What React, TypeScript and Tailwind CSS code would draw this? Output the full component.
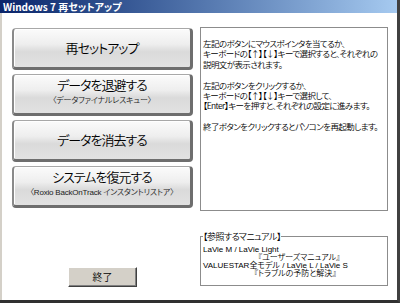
import React from "react";

const jp = "font-['Noto_Sans_CJK_JP','Noto_Sans',sans-serif]";
const mixed = "font-['Liberation_Sans','Noto_Sans_CJK_JP',sans-serif]";

function BigButton({ title, sub }: { title: string; sub?: string }) {
  return (
    <div
      className={`h-[42px] w-[181px] shrink-0 rounded-[4px] border-t border-l-2 border-r-[3px] border-b-[3px] border-t-[#a8a8a8] border-l-[#8a8a8a] border-r-[#6e6e6e] border-b-[#6e6e6e] bg-[linear-gradient(to_bottom,#fbfbfb_0%,#eeeeee_40%,#dadada_60%,#e2e2e2_100%)] shadow-[inset_1px_1px_0_#ffffff] flex flex-col items-center ${
        sub ? "justify-start pt-[2px]" : "justify-center"
      }`}
    >
      <div className={`text-[13px] leading-[16px] tracking-[-1px] text-black whitespace-nowrap ${sub ? "" : "-mt-[1px]"}`}>
        {title}
      </div>
      {sub && (
        <div className={`text-[8px] leading-[10px] tracking-[-0.2px] text-[#222] whitespace-nowrap mt-[3px] ${mixed}`}>
          {sub}
        </div>
      )}
    </div>
  );
}

export default function App() {
  return (
    <div
      className={`w-[400px] h-[303px] bg-white flex flex-col border-r-[3px] border-b-[3px] border-r-[#404040] border-b-[#303030] ${jp} font-[350] [font-feature-settings:'palt']`}
    >
      <div className="h-[13px] shrink-0 bg-linear-to-r from-[#0a246a] to-[#a6caf0] flex items-center pl-[3px]">
        <span className="text-white font-bold text-[10px] leading-[13px] whitespace-nowrap">
          Windows 7 再セットアップ
        </span>
      </div>
      <div className="flex-1 flex flex-row border-l-2 border-l-[#d4d0c8]">
        <div className="ml-[10px] pt-[15px] flex flex-col">
          <div className="flex flex-col gap-[4px]">
            <BigButton title="再セットアップ" />
            <BigButton title="データを退避する" sub="〈データファイナルレスキュー〉" />
            <BigButton title="データを消去する" />
            <BigButton title="システムを復元する" sub="〈Roxio BackOnTrack インスタントリストア〉" />
          </div>
          <div className="mt-[59px] ml-[56px] w-[69px] h-[20px] shrink-0 bg-[#d4d0c8] border border-t-white border-l-white border-r-[#404040] border-b-[#404040] shadow-[inset_-1px_-1px_0_#808080] flex items-center justify-center">
            <span className="text-[10px] leading-[12px] text-black">終了</span>
          </div>
        </div>
        <div className="ml-[7px] pt-[14px] flex flex-col w-[188px]">
          <div className="h-[184px] shrink-0 border border-[#8c8c8c] pt-[10px] pl-[2px] text-[8.5px] leading-[10.4px] text-black tracking-[-0.6px] whitespace-nowrap">
            <div>左記のボタンにマウスポインタを当てるか、</div>
            <div>キーボードの【↑】【↓】キーで選択すると、それぞれの</div>
            <div>説明文が表示されます。</div>
            <div>&nbsp;</div>
            <div>左記のボタンをクリックするか、</div>
            <div>キーボードの【↑】【↓】キーで選択して、</div>
            <div>【Enter】キーを押すと、それぞれの設定に進みます。</div>
            <div>&nbsp;</div>
            <div>終了ボタンをクリックするとパソコンを再起動します。</div>
          </div>
          <fieldset className="mt-[20px] h-[55px] shrink-0 border border-[#8c8c8c] pl-[2px] pt-[4px]">
            <legend className="text-[9px] leading-[11px] text-black whitespace-nowrap tracking-[-0.5px]">【参照するマニュアル】</legend>
            <div className={`text-[8px] leading-[8px] text-black whitespace-nowrap ${mixed}`}>
              <div>LaVie M / LaVie Light</div>
              <div className="pl-[55px]">『ユーザーズマニュアル』</div>
              <div>VALUESTAR全モデル / LaVie L / LaVie S</div>
              <div className="pl-[51px]">『トラブルの予防と解決』</div>
            </div>
          </fieldset>
        </div>
      </div>
    </div>
  );
}
